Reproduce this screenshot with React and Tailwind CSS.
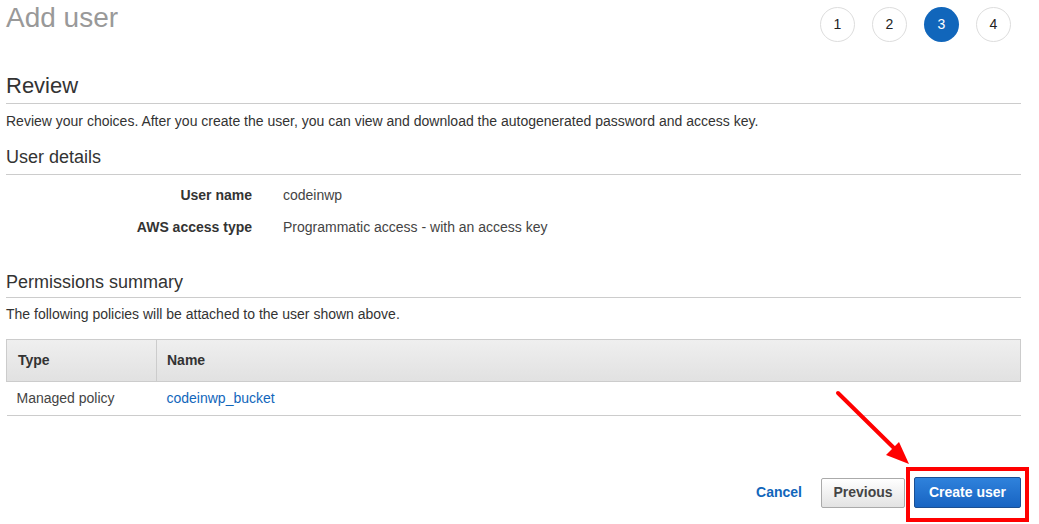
const steps = [1, 2, 3, 4];

function StepCircle({ n, active }) {
  return (
    <div
      className={
        active
          ? "flex h-[35px] w-[35px] items-center justify-center rounded-full bg-[#1166bb] text-[14px] text-white"
          : "flex h-[35px] w-[35px] items-center justify-center rounded-full border border-[#dddddd] bg-white text-[14px] text-[#222]"
      }
    >
      {n}
    </div>
  );
}

function SectionTitle({ children, size = "text-[18px] leading-[22px]", pb = "pb-[5px]" }) {
  return (
    <div className={`border-b border-[#cccccc] ${pb}`}>
      <h2 className={`${size} font-normal text-[#333]`}>{children}</h2>
    </div>
  );
}

export default function App() {
  return (
    <div
      className="relative h-[524px] w-[1039px] overflow-hidden bg-white text-[#333]"
      style={{ fontFamily: '"Liberation Sans", Arial, sans-serif' }}
    >
      <div className="pl-[6px] pr-[18px]">
        {/* Cabecera */}
        <div className="flex items-start justify-between">
          <h1 className="mt-[2px] text-[28px] leading-[32px] font-normal text-[#999999]">Add user</h1>
          <div className="mr-[10px] mt-[7px] flex gap-[17px]">
            {steps.map((s) => (
              <StepCircle key={s} n={s} active={s === 3} />
            ))}
          </div>
        </div>

        {/* Review */}
        <div className="mt-[31px]">
          <SectionTitle size="text-[22px] leading-[26px]" pb="pb-[4px]">Review</SectionTitle>
          <p className="mt-[7px] text-[14px] leading-[20px] text-[#333]">
            Review your choices. After you create the user, you can view and download the autogenerated password and access key.
          </p>
        </div>

        {/* User details */}
        <div className="mt-[15px]">
          <SectionTitle pb="pb-[6px]">User details</SectionTitle>
          <div className="mt-[10px] flex flex-col gap-[12px] text-[14px] leading-[20px]">
            <div className="flex">
              <div className="w-[246px] text-right font-bold text-[#333]">User name</div>
              <div className="pl-[31px] text-[#444]">codeinwp</div>
            </div>
            <div className="flex">
              <div className="w-[246px] text-right font-bold text-[#333]">AWS access type</div>
              <div className="pl-[31px] text-[#444]">Programmatic access - with an access key</div>
            </div>
          </div>
        </div>

        {/* Permissions summary */}
        <div className="mt-[34px]">
          <SectionTitle pb="pb-[4px]">Permissions summary</SectionTitle>
          <p className="mt-[6px] text-[14px] leading-[20px] text-[#333]">
            The following policies will be attached to the user shown above.
          </p>
          <table className="mt-[15px] w-full border-collapse text-left text-[14px]">
            <thead>
              <tr className="bg-gradient-to-b from-[#efefef] to-[#e1e1e1]">
                <th className="h-[42px] w-[150px] border border-[#cccccc] pl-[11px] font-bold text-[#333]">Type</th>
                <th className="h-[42px] border border-[#cccccc] pl-[10px] font-bold text-[#333]">Name</th>
              </tr>
            </thead>
            <tbody>
              <tr className="border-b border-[#cccccc]">
                <td className="h-[34px] pl-[10px] text-[#444]">Managed policy</td>
                <td className="h-[34px] pl-[10px] text-[#1166bb]">codeinwp_bucket</td>
              </tr>
            </tbody>
          </table>
        </div>

        {/* Botones */}
        <div className="mt-[61px] flex items-center justify-end">
          <span className="mr-[19px] text-[14px] font-bold text-[#1166bb]">Cancel</span>
          <button className="h-[30px] w-[84px] rounded-[2px] border border-[#aaaaaa] bg-gradient-to-b from-[#ffffff] to-[#e3e3e3] text-[14px] font-bold text-[#444]">
            Previous
          </button>
          <div className="relative ml-[9px]">
            <button className="h-[31px] w-[107px] rounded-[2px] border border-[#1b4f93] bg-gradient-to-b from-[#2f82dc] to-[#1864c2] text-[14px] font-bold text-white">
              Create user
            </button>
            <div className="pointer-events-none absolute left-[-8px] top-[-10px] h-[55px] w-[123px] border-[4px] border-[#ff0000]"></div>
          </div>
        </div>
      </div>

      {/* Flecha roja */}
      <svg className="pointer-events-none absolute left-0 top-0" width="1039" height="524">
        <line x1="838" y1="393" x2="897" y2="451" stroke="#ff0000" strokeWidth="4" strokeLinecap="round" />
        <polygon points="909,464 886,455 899,442" fill="#ff0000" />
      </svg>
    </div>
  );
}
